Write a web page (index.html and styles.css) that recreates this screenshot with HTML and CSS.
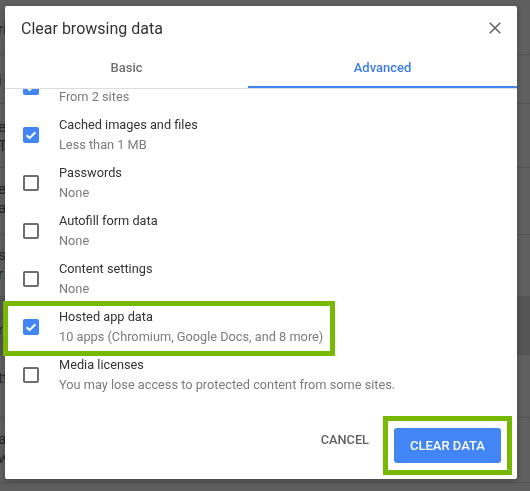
FILE: index.html
```html
<!DOCTYPE html>
<html lang="en">
<head>
<meta charset="utf-8">
<title>Clear browsing data</title>
<link rel="stylesheet" href="styles.css">
</head>
<body>
<div class="page">
  <div class="prow h55"><span class="frag f1">ri</span></div>
  <div class="prow h49"><span class="frag f2">i</span></div>
  <div class="prow h64"><span class="frag f3">e<br>T</span></div>
  <div class="prow h67"><span class="frag f4">et<br>a</span></div>
  <div class="prow h62"><span class="frag f5">s<br>r</span></div>
  <div class="prow h58 dark"><span class="frag f6">n</span></div>
  <div class="prow h63"><span class="frag f7">tt</span></div>
  <div class="prow h65"><span class="frag f8">a<br>w</span></div>
  <div class="prow tail"></div>
</div>

<div class="dialog" role="dialog" aria-label="Clear browsing data">
  <div class="dlg-head">
    <h1 class="dlg-title">Clear browsing data</h1>
    <button class="close" aria-label="Close">
      <svg width="12" height="12" viewBox="0 0 12 12"><path d="M0.7 0.7 L11.3 11.3 M11.3 0.7 L0.7 11.3" stroke="#666" stroke-width="1.6" fill="none"/></svg>
    </button>
  </div>
  <div class="tabs">
    <div class="tab basic">Basic</div>
    <div class="tab active">Advanced</div>
  </div>
  <div class="list">
    <div class="items">
      <div class="item">
        <span class="cb on"><svg width="16" height="16" viewBox="0 0 16 16"><path d="M3.6 8.2 L6.6 11 L12.4 5.2" stroke="#fff" stroke-width="2" fill="none"/></svg></span>
        <div class="txt"><div class="lbl">Cookies and other site data</div><div class="sub">From 2 sites</div></div>
      </div>
      <div class="item">
        <span class="cb on"><svg width="16" height="16" viewBox="0 0 16 16"><path d="M3.6 8.2 L6.6 11 L12.4 5.2" stroke="#fff" stroke-width="2" fill="none"/></svg></span>
        <div class="txt"><div class="lbl">Cached images and files</div><div class="sub">Less than 1 MB</div></div>
      </div>
      <div class="item">
        <span class="cb"></span>
        <div class="txt"><div class="lbl">Passwords</div><div class="sub">None</div></div>
      </div>
      <div class="item">
        <span class="cb"></span>
        <div class="txt"><div class="lbl">Autofill form data</div><div class="sub">None</div></div>
      </div>
      <div class="item">
        <span class="cb"></span>
        <div class="txt"><div class="lbl">Content settings</div><div class="sub">None</div></div>
      </div>
      <div class="item marked">
        <span class="cb on"><svg width="16" height="16" viewBox="0 0 16 16"><path d="M3.6 8.2 L6.6 11 L12.4 5.2" stroke="#fff" stroke-width="2" fill="none"/></svg></span>
        <div class="txt"><div class="lbl">Hosted app data</div><div class="sub">10 apps (Chromium, Google Docs, and 8 more)</div></div>
        <span class="hl"></span>
      </div>
      <div class="item">
        <span class="cb"></span>
        <div class="txt"><div class="lbl">Media licenses</div><div class="sub">You may lose access to protected content from some sites.</div></div>
      </div>
    </div>
  </div>
  <div class="actions">
    <button class="btn cancel">CANCEL</button>
    <span class="hl-wrap"><button class="btn primary">CLEAR DATA</button></span>
  </div>
</div>
</body>
</html>
```

FILE: styles.css
```css
html, body {
  margin: 0;
  padding: 0;
}
body {
  width: 530px;
  height: 491px;
  overflow: hidden;
  background: #5e5e5e;
  font-family: Roboto, "Liberation Sans", Arial, sans-serif;
}

/* background page under the modal scrim */
.page {
  display: flex;
  flex-direction: column;
}
.prow {
  box-sizing: border-box;
  border-bottom: 1px solid #545454;
  background: #5f5f5f;
  position: relative;
}
.prow.dark { background: #555; }
.prow.tail { flex: 1; height: 12px; background: #4a4a4a; border: 0; }
.h55 { height: 55px; }
.h49 { height: 49px; }
.h64 { height: 64px; }
.h67 { height: 67px; }
.h62 { height: 62px; }
.h58 { height: 58px; }
.h63 { height: 63px; }
.h65 { height: 65px; }
.frag {
  display: block;
  margin-left: -2px;
  color: #262626;
  font-size: 15px;
  line-height: 19px;
}
.f1 { padding-top: 20px; }
.f2 { padding-top: 16px; }
.f3 { padding-top: 14px; }
.f4 { padding-top: 12px; }
.f5 { padding-top: 11px; }
.f6 { padding-top: 24px; }
.f7 { padding-top: 14px; }
.f8 { padding-top: 12px; }

/* dialog */
.dialog {
  position: fixed;
  left: 5px;
  top: 6px;
  width: 512px;
  height: 473px;
  background: #fff;
  border-radius: 2px;
  box-shadow: 0 2px 6px rgba(0,0,0,0.25);
  display: flex;
  flex-direction: column;
}
.dlg-head {
  height: 42px;
  box-sizing: border-box;
  padding: 13px 16px 0 16px;
  display: flex;
  justify-content: space-between;
  align-items: flex-start;
}
.dlg-title {
  margin: 0;
  font-size: 16px;
  line-height: 20px;
  font-weight: 400;
  color: #333;
}
.close {
  border: 0;
  background: none;
  padding: 0;
  width: 12px;
  height: 20px;
  margin-top: -1px;
  display: flex;
  align-items: center;
  justify-content: center;
}

.tabs {
  display: flex;
  height: 41px;
  box-sizing: border-box;
  border-bottom: 1px solid #dcdcdc;
}
.tab {
  height: 40px;
  box-sizing: border-box;
  display: flex;
  align-items: center;
  justify-content: center;
  font-size: 13px;
  line-height: 16px;
  font-weight: 500;
  color: #6f6f6f;
}
.tab.basic { width: 243px; }
.tab.active {
  flex: 1;
  color: #3c7be6;
  border-bottom: 2px solid #4285f4;
  padding-top: 2px;
}

.list {
  flex: 1;
  clip-path: inset(0 -10px 0 -10px);
}
.items {
  margin-top: -26px;
  display: flex;
  flex-direction: column;
}
.item {
  position: relative;
  height: 48px;
  display: flex;
  align-items: center;
  padding-left: 18px;
  gap: 20px;
}
.cb {
  width: 16px;
  height: 16px;
  box-sizing: border-box;
  border: 2px solid #6e6e6e;
  border-radius: 2px;
  flex: none;
  margin-top: -1px;
}
.cb.on {
  border: 0;
  background: #4285f4;
}
.cb svg { display: block; }
.txt {
  font-size: 12.75px;
  line-height: 20px;
}
.lbl { color: #333; }
.sub { color: #7b7b7b; }

/* annotation highlight */
.hl {
  position: absolute;
  left: -2px;
  top: -2px;
  width: 332px;
  height: 55px;
  box-sizing: border-box;
  border: 5px solid #76b900;
  pointer-events: none;
}

.actions {
  height: 80px;
  box-sizing: border-box;
  padding: 0 5px 4px 0;
  display: flex;
  justify-content: flex-end;
  align-items: flex-end;
}
.btn {
  font-family: Roboto, "Liberation Sans", Arial, sans-serif;
  font-size: 13px;
  font-weight: 500;
  border: 0;
  background: none;
  padding: 0;
}
.cancel {
  color: #5f5f5f;
  font-size: 12.75px;
  height: 36px;
  padding: 0 8px;
  margin: 0 6px 18px 0;
}
.hl-wrap {
  display: flex;
  border: 5px solid #76b900;
  padding: 7px 6px;
}
.primary {
  width: 107px;
  height: 35px;
  border-radius: 3px;
  background: #4285f4;
  color: #fff;
}
```
